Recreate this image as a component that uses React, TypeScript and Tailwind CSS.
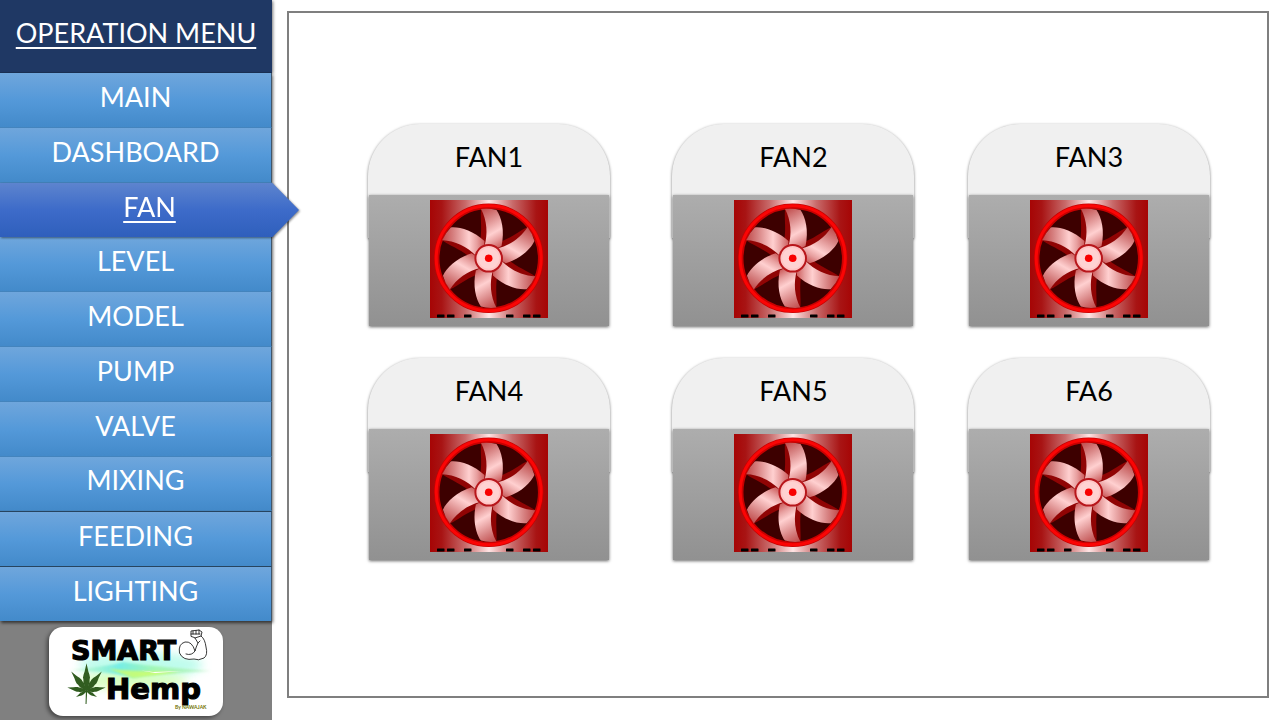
const menu = ["MAIN", "DASHBOARD", "FAN", "LEVEL", "MODEL", "PUMP", "VALVE", "MIXING", "FEEDING", "LIGHTING"];
const fans = ["FAN1", "FAN2", "FAN3", "FAN4", "FAN5", "FA6"];
const active = "FAN";
const angles = [0, 60, 120, 180, 240, 300];

function FanIcon() {
  return (
    <svg viewBox="0 0 118 118" className="h-[118px] w-[118px]" aria-hidden="true">
      <defs>
        <linearGradient id="housing" x1="0" x2="1">
          <stop offset="0" stopColor="#a60505" />
          <stop offset="0.1" stopColor="#a81414" />
          <stop offset="0.3" stopColor="#c86a6a" />
          <stop offset="0.5" stopColor="#ffe4e4" />
          <stop offset="0.7" stopColor="#c86a6a" />
          <stop offset="0.9" stopColor="#a81414" />
          <stop offset="1" stopColor="#a60505" />
        </linearGradient>
        <linearGradient id="blade" gradientUnits="userSpaceOnUse" x1="52" y1="10" x2="73" y2="47">
          <stop offset="0" stopColor="#c25050" />
          <stop offset="0.25" stopColor="#d88484" />
          <stop offset="0.6" stopColor="#ffd0d0" />
          <stop offset="0.78" stopColor="#e8a0a0" />
          <stop offset="1" stopColor="#c85252" />
        </linearGradient>
      </defs>
      <rect width="118" height="118" fill="url(#housing)" />
      <circle cx="58.7" cy="58.3" r="52" fill="#3d0000" stroke="#c80000" strokeWidth="5.5" />
      <circle cx="58.7" cy="58.3" r="52.5" fill="none" stroke="#fb0505" strokeWidth="3" />
      {angles.map((angle) => (
        <path
          key={angle}
          d="M51 9 C50 20 53 31 49 46 L59 49 L60 24 Z"
          fill="#900404"
          transform={`rotate(${angle} 58.7 58.3)`}
        />
      ))}
      {angles.map((angle) => (
        <path
          key={angle}
          d="M51 9 Q59 8 66.500 10 C71.500 17 75 31 71.500 46 L60 52 L54.500 46 C58 34 57 20 51 9 Z"
          fill="url(#blade)"
          transform={`rotate(${angle} 58.7 58.3)`}
        />
      ))}
      <circle cx="58.7" cy="58.3" r="13.3" fill="#ffc6c6" stroke="#b8161b" strokeWidth="2" />
      <circle cx="58.7" cy="58.3" r="10.5" fill="#ffd2d2" />
      <circle cx="58.7" cy="58.3" r="3.8" fill="#f80000" />
      {[7, 17, 34, 76, 93, 103].map((x) => (
        <rect key={x} x={x} y="114.5" width="7.5" height="3" rx="0.5" fill="#000" />
      ))}
    </svg>
  );
}

function Logo() {
  const leaflets: [number, number][] = [
    [0, 1.03],
    [-38, 0.92],
    [38, 0.92],
    [-80, 0.72],
    [80, 0.72],
    [-120, 0.45],
    [120, 0.45],
  ];
  return (
    <svg viewBox="0 0 174 89" className="h-[89px] w-[174px]" role="img" aria-label="Smart Hemp">
      <defs>
        <filter id="soft" x="-20%" y="-80%" width="140%" height="260%">
          <feGaussianBlur stdDeviation="5" />
        </filter>
        <filter id="thin" x="-20%" y="-80%" width="140%" height="260%">
          <feGaussianBlur stdDeviation="1.2" />
        </filter>
        <linearGradient id="beam" x1="0" x2="1">
          <stop offset="0" stopColor="#b4f5b0" stopOpacity="0.4" />
          <stop offset="0.35" stopColor="#6fece6" />
          <stop offset="0.6" stopColor="#a0f7b0" />
          <stop offset="1" stopColor="#9eeaa0" stopOpacity="0.4" />
        </linearGradient>
      </defs>
      <ellipse cx="92" cy="38" rx="62" ry="13" fill="#a9fbe6" opacity="0.75" filter="url(#soft)" />
      <ellipse cx="84" cy="54" rx="54" ry="9" fill="#d0ffb0" opacity="0.8" filter="url(#soft)" />
      <path d="M20 43 Q56 40 74 35 Q98 39 163 44 Q106 47 84 51 Q66 45 20 43Z" fill="url(#beam)" opacity="0.9" filter="url(#thin)" />
      <path d="M60 42 L88 44 L130 45 L84 51Z" fill="#d4ff62" opacity="0.75" filter="url(#thin)" />
      <path d="M92 43.5 L104 45 L134 44 L106 46Z" fill="#fff" />
      <g fill="#000" stroke="#000" strokeWidth="1.2">
        <text x="22" y="33" className="font-['DejaVu_Sans',sans-serif] text-[27px] font-bold">SMART</text>
        <text x="57" y="72" className="font-['DejaVu_Sans',sans-serif] text-[29px] font-bold">Hemp</text>
      </g>
      <text x="126" y="82" className="text-[5px] font-bold" fill="#6f7000">By NAWAJAK</text>
      <g fill="#fff" stroke="#222" strokeWidth="0.9" strokeLinejoin="round" strokeLinecap="round">
        <path d="M146 11 L149 16 Q147 20 146 24 Q143 14 136 15 Q129 17 130.500 26 Q134 34 145 32 Q149 34 155 31 Q159 28 157 20 Q156 12 152 9 L153 5 L150 3 L142 4 L142 9 Z" />
        <path d="M144 4 L144 7 M147 3.5 L147 7 M150 3 L150 7 M142 7 L151 7 M146 11 L152 9 M146 24 Q143 29 137 27 M149 16 L151 14" fill="none" />
      </g>
      <g fill="#315d20">
        {leaflets.map(([angle, scale]) => (
          <path
            key={angle}
            d="M0 0 L-2 -4 L-2.2 -6 L-3 -8 L-3 -11 L-3.4 -13 L-2.800 -16 L-1.8 -19 L0 -27 L1.8 -19 L2.800 -16 L3.4 -13 L3 -11 L3 -8 L2.2 -6 L2 -4 Z"
            transform={`translate(37.5 64) rotate(${angle}) scale(${scale})`}
          />
        ))}
        <path d="M37 62 L36.5 77 L37.5 77 L38.3 62Z" />
      </g>
    </svg>
  );
}

export default function App() {
  return (
    <div className="flex min-h-screen bg-white font-['Lato','Open_Sans',sans-serif] text-[27px] leading-9">
      <aside className="z-10 flex w-[272px] shrink-0 flex-col bg-[#808080]">
        <h1 className="flex h-[73px] items-center justify-center whitespace-nowrap border-b border-[#1b3154] bg-[#1f3864] pb-1.5 text-white underline decoration-2 underline-offset-4 shadow-[1px_1px_3px_#0008]">
          OPERATION MENU
        </h1>
        <nav aria-label="Operation menu" className="grid flex-1 auto-rows-fr shadow-[1px_2px_3px_#0009]">
          {menu.map((item) =>
            item === active ? (
              <div key={item} className="-mr-[27px] grid drop-shadow-[1px_1px_1px_#0007]">
                <a
                  href="#fan"
                  aria-current="page"
                  className="flex items-center justify-center bg-linear-to-b from-[#5d84ce] via-[#3d6bc9] to-[#2f5fbc] pb-1.5 text-white underline decoration-2 underline-offset-4 [clip-path:polygon(0_0,272px_0,100%_50%,272px_100%,0_100%)]"
                >
                  {item}
                </a>
              </div>
            ) : (
              <a
                key={item}
                href={`#${item.toLowerCase()}`}
                className={`flex items-center justify-center border-r border-r-[#41566a] bg-linear-to-b from-[#6fa6dc] via-[#5499d9] to-[#438aca] pb-1.5 text-white ${
                  item === "FEEDING" || item === "LIGHTING" ? "border-t border-t-[#27445f]" : "border-b border-b-[#4484bd]"
                }`}
              >
                {item}
              </a>
            ),
          )}
        </nav>
        <div className="flex h-[99px] justify-center pt-[6px]">
          <div className="h-[89px] w-[174px] overflow-hidden rounded-[14px] bg-white shadow-[-2px_2px_4px_#0007]">
            <Logo />
          </div>
        </div>
      </aside>

      <main className="mt-[11px] mr-[11px] mb-[22px] ml-[15px] flex-1 border-2 border-[#7f7f7f] pt-[111px] pr-[57px] pl-[79px]">
        <div className="grid grid-cols-[305fr_296fr_242fr] gap-y-8">
          {fans.map((fan) => (
            <section key={fan} className="w-[242px]">
              <h2 className="h-[114px] rounded-t-[52px] bg-[#f0f0f0] pt-[15px] text-center text-black shadow-[0_1px_3px_#0008]">
                {fan}
              </h2>
              <div className="relative mx-px -mt-[43px] flex h-[131px] justify-center bg-linear-to-b from-[#adadad] to-[#919191] pt-[5px] shadow-[0_1px_3px_#0009]">
                <FanIcon />
              </div>
            </section>
          ))}
        </div>
      </main>
    </div>
  );
}
